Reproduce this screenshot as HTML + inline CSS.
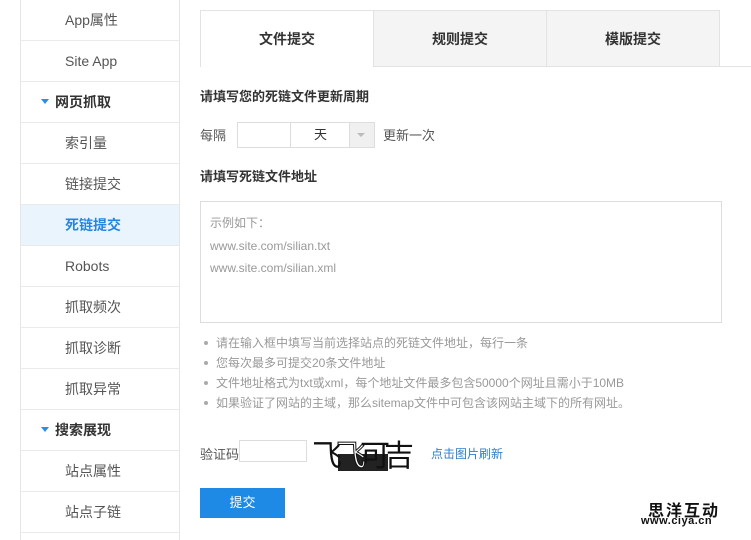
<!DOCTYPE html>
<html><head><meta charset="utf-8"><style>
*{margin:0;padding:0;box-sizing:border-box}
body{width:751px;height:535px;overflow:hidden;background:#fff;font-family:"Liberation Sans","Noto Sans CJK SC",sans-serif;font-size:13px;color:#333;position:relative}
.side{position:absolute;left:20px;top:0px;width:160px;border-left:1px solid #e6e6e6;border-right:1px solid #e6e6e6;height:540px}
.it{height:41px;line-height:41px;border-bottom:1px solid #eaeaea;padding-left:44px;color:#555;font-size:14px}
.it.h{padding-left:20px;font-weight:bold;color:#333;font-size:14px}
.it.h:before{content:"";display:inline-block;border-left:4px solid transparent;border-right:4px solid transparent;border-top:5px solid #2b8de6;vertical-align:middle;margin-right:6px;position:relative;top:-2px}
.it.a{background:#eaf4fd;color:#2584e0;font-weight:bold}
.abs{position:absolute}
.tab{position:absolute;top:10px;height:57px;line-height:56px;text-align:center;font-weight:bold;font-size:14px;color:#333;border:1px solid #e3e3e3;background:#f4f4f4}
.lbl{font-weight:bold;font-size:13px;color:#333}
.g{color:#999;font-size:12px}
ul{list-style:none}
li{position:relative;padding-left:16px;color:#999;font-size:12px;height:20px;line-height:20px;white-space:nowrap}
li:before{content:"";position:absolute;left:4px;top:8px;width:4px;height:4px;border-radius:50%;background:#aaa}
</style></head><body>
<div class="side">
<div class="it">App属性</div>
<div class="it">Site App</div>
<div class="it h">网页抓取</div>
<div class="it">索引量</div>
<div class="it">链接提交</div>
<div class="it a">死链提交</div>
<div class="it">Robots</div>
<div class="it">抓取频次</div>
<div class="it">抓取诊断</div>
<div class="it">抓取异常</div>
<div class="it h">搜索展现</div>
<div class="it">站点属性</div>
<div class="it">站点子链</div>
</div>
<div class="abs" style="left:373px;top:66px;width:378px;height:1px;background:#e3e3e3"></div>
<div class="tab" style="left:200px;width:174px;background:#fff;border-bottom:none;height:57px">文件提交</div>
<div class="tab" style="left:373px;width:174px">规则提交</div>
<div class="tab" style="left:546px;width:174px">模版提交</div>
<div class="abs lbl" style="left:200px;top:86px">请填写您的死链文件更新周期</div>
<div class="abs" style="left:200px;top:125px;color:#555">每隔</div>
<div class="abs" style="left:237px;top:122px;width:54px;height:26px;border:1px solid #ddd"></div>
<div class="abs" style="left:290px;top:122px;width:85px;height:26px;border:1px solid #ddd;line-height:24px;font-size:13px"><span style="position:absolute;left:23px">天</span><span style="position:absolute;right:0;top:0;width:25px;height:24px;background:#f0f0f0;border-left:1px solid #ddd"></span><span style="position:absolute;right:9px;top:10px;border-left:4px solid transparent;border-right:4px solid transparent;border-top:4px solid #bbb"></span></div>
<div class="abs" style="left:383px;top:125px;color:#555">更新一次</div>
<div class="abs lbl" style="left:200px;top:166px">请填写死链文件地址</div>
<div class="abs" style="left:200px;top:201px;width:522px;height:122px;border:1px solid #ddd"></div>
<div class="abs g" style="left:210px;top:212px;line-height:22.5px">示例如下：<br>www.site.com/silian.txt<br>www.site.com/silian.xml</div>
<ul class="abs" style="left:200px;top:333px">
<li>请在输入框中填写当前选择站点的死链文件地址，每行一条</li>
<li>您每次最多可提交20条文件地址</li>
<li>文件地址格式为txt或xml，每个地址文件最多包含50000个网址且需小于10MB</li>
<li>如果验证了网站的主域，那么sitemap文件中可包含该网站主域下的所有网址。</li>
</ul>
<div class="abs" style="left:200px;top:444px;color:#555">验证码</div>
<div class="abs" style="left:239px;top:440px;width:68px;height:22px;border:1px solid #ddd"></div>
<div class="abs" style="left:312px;top:436px;width:104px;height:38px;overflow:hidden">
<div class="abs" style="left:26px;top:18px;width:50px;height:17px;background:#222"></div>
<div class="abs" style="left:0;top:0;font-size:30px;font-family:'Noto Sans CJK SC',sans-serif;letter-spacing:-6px;color:#111;line-height:34px;white-space:nowrap">飞<span style="color:#fff;-webkit-text-stroke:1px #111">飞</span>可吉</div>
</div>
<div class="abs" style="left:431px;top:445px;color:#2b7fd0;font-size:12px">点击图片刷新</div>
<div class="abs" style="left:200px;top:488px;width:85px;height:30px;background:#1e8ae6;color:#fff;text-align:center;line-height:30px;font-size:13px">提交</div>
<div class="abs" style="left:648px;top:497px;font-weight:bold;font-size:16px;color:#111;letter-spacing:2px">思洋互动</div>
<div class="abs" style="left:641px;top:515px;font-weight:bold;font-size:11px;color:#111;letter-spacing:0.5px">www.ciya.cn</div>
</body></html>
